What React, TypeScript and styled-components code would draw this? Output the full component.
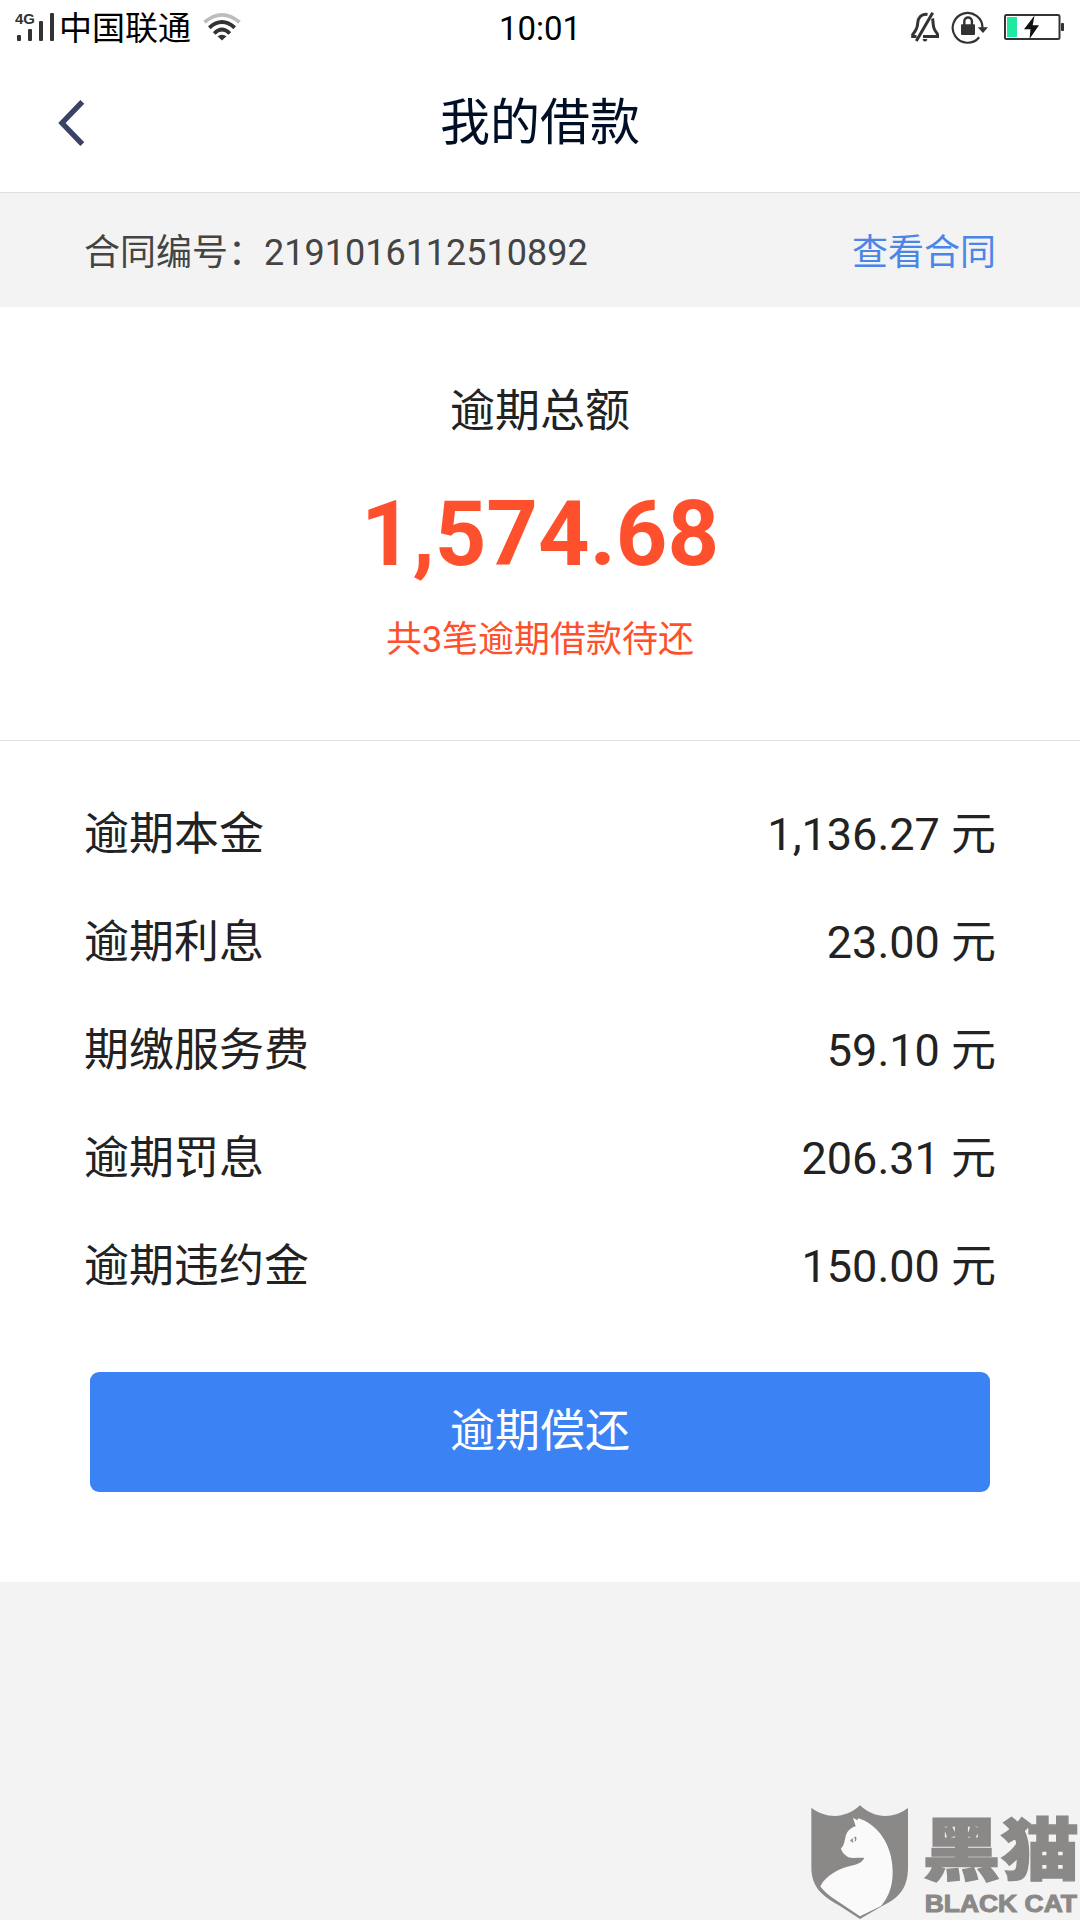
import React from "react";
import styled, { createGlobalStyle } from "styled-components";

const GlobalStyle = createGlobalStyle`
  * { box-sizing: border-box; }
  body {
    margin: 0;
    background: #f3f3f3;
    font-family: Roboto, "Noto Sans CJK SC", sans-serif;
  }
`;

const Screen = styled.div`
  position: relative;
  display: flex;
  flex-direction: column;
  width: 1080px;
  height: 1920px;
  overflow: hidden;
  background: #f3f3f3;
  color: #222;
`;

const StatusBar = styled.div`
  display: grid;
  grid-template-columns: 1fr auto 1fr;
  align-items: center;
  height: 54px;
  padding: 4px 14px 0 15px;
  background: #fff;
  color: #000;
  font-size: 33px;
  line-height: 50px;
`;

const StatusGroup = styled.div<{ $end?: boolean }>`
  display: flex;
  align-items: center;
  justify-content: ${(p) => (p.$end ? "flex-end" : "flex-start")};
  height: 50px;
`;

const Carrier = styled.span`
  margin: 0 12px 0 3px;
`;

const Clock = styled.span`
  padding-right: 1px;
`;

const Icon = styled.svg<{ $w: number; $h?: number; $ml?: number }>`
  display: block;
  flex: none;
  width: ${(p) => p.$w}px;
  height: ${(p) => p.$h ?? 50}px;
  margin-left: ${(p) => p.$ml ?? 0}px;
`;

const Header = styled.header`
  display: grid;
  grid-template-columns: 150px 1fr 150px;
  align-items: center;
  height: 139px;
  border-bottom: 1px solid #e1e1e1;
  background: #fff;
`;

const BackButton = styled.button`
  display: flex;
  align-items: center;
  height: 138px;
  padding: 0 0 0 54px;
  border: 0;
  background: none;
`;

const Title = styled.h1`
  margin: 0;
  color: #000f26;
  font-size: 50px;
  font-weight: 400;
  line-height: 138px;
  text-align: center;
`;

const ContractBar = styled.div`
  display: flex;
  justify-content: space-between;
  height: 114px;
  padding: 6px 84px 0;
  color: #444;
  font-size: 36px;
  line-height: 108px;
`;

const ContractLink = styled.a`
  color: #4a86e8;
`;

const Summary = styled.section`
  display: flex;
  flex-direction: column;
  align-items: center;
  height: 434px;
  padding-top: 75px;
  border-bottom: 1px solid #e1e1e1;
  background: #fff;
`;

const SummaryTitle = styled.div`
  font-size: 45px;
  line-height: 60px;
`;

const Amount = styled.div`
  margin: 33px 0 20px;
  color: #ff502d;
  font-size: 90px;
  font-weight: 700;
  line-height: 120px;
`;

const SummaryNote = styled.div`
  color: #ff502d;
  font-size: 36px;
  line-height: 50px;
`;

const Details = styled.section`
  height: 841px;
  padding: 40px 84px 0;
  background: #fff;
`;

const DetailRow = styled.div`
  display: flex;
  justify-content: space-between;
  font-size: 45px;
  line-height: 108px;
`;

const RepayButton = styled.button`
  display: block;
  width: 900px;
  height: 120px;
  margin: 51px auto 0;
  padding: 0;
  border: 0;
  border-radius: 9px;
  background: #3b82f4;
  color: #fff;
  font-family: inherit;
  font-size: 45px;
  line-height: 120px;
`;

const Watermark = styled.svg`
  position: absolute;
  right: 0;
  bottom: 0;
  width: 300px;
  height: 140px;
`;

const rows = [
  { label: "逾期本金", value: "1,136.27 元" },
  { label: "逾期利息", value: "23.00 元" },
  { label: "期缴服务费", value: "59.10 元" },
  { label: "逾期罚息", value: "206.31 元" },
  { label: "逾期违约金", value: "150.00 元" },
];

const SignalIcon = () => (
  <Icon $w={41} viewBox="15 4 41 50">
    <text x="15" y="24" fontFamily="Liberation Sans, sans-serif" fontWeight="700" fontSize="15" fill="#333" textLength="20" lengthAdjust="spacingAndGlyphs">4G</text>
    <g fill="#333">
      <rect x="17" y="35" width="4" height="6" rx="1" />
      <rect x="28" y="29" width="4" height="12" rx="1" />
      <rect x="39" y="21" width="4" height="20" rx="1" />
      <rect x="50" y="13" width="4" height="28" rx="1" />
    </g>
  </Icon>
);

const WifiIcon = () => (
  <Icon $w={38} viewBox="203 4 38 50">
    <g fill="none" strokeWidth="3.8">
      <path d="M204.5 22.2Q222 7.5 239.5 22.2" stroke="#bdbdbd" />
      <path d="M209.3 27.7Q222 16.5 234.7 27.7" stroke="#333" />
      <path d="M214.2 33.5Q222 25.7 229.8 33.5" stroke="#333" />
    </g>
    <path d="M217.5 36.3Q222 33 226.5 36.3L222 40.5Z" fill="#333" />
  </Icon>
);

const MutedBellIcon = () => (
  <Icon $w={30} viewBox="910 4 30 50">
    <g fill="none" stroke="#333" strokeWidth="3">
      <path d="M927.5 14.4C921 13.5 918 18 917.7 23C917.5 29 915.5 31 912.7 34.5V36.5H916.5" />
      <path d="M932.5 18.5C933.5 22 932.5 25 934.3 29C935.5 32 937.3 33 937.5 34.5V36.5H923" />
      <path d="M932.7 12.7L916.3 41" />
    </g>
    <path d="M922.8 39h4.400v1.200q-2.200 2.600-4.400 0z" fill="#333" />
  </Icon>
);

const RotationLockIcon = () => (
  <Icon $w={37} $ml={11} viewBox="951 4 37 50">
    <path d="M979.2 37.2A14.9 14.9 0 1 1 982.5 28" fill="none" stroke="#333" strokeWidth="2.2" />
    <path d="M977.7 27.3H988L983 33Z" fill="#333" />
    <rect x="961" y="24.3" width="14" height="10.7" rx="1" fill="#333" />
    <path d="M964.3 25V21.3a3.8 3.8 0 0 1 7.6 0V25" fill="none" stroke="#333" strokeWidth="2.4" />
  </Icon>
);

const BatteryIcon = () => (
  <Icon $w={62} $ml={16} viewBox="1004 4 62 50">
    <rect x="1005" y="15" width="54.5" height="24" rx="1.5" fill="none" stroke="#333" strokeWidth="2" />
    <rect x="1007" y="17" width="10" height="20" fill="#20e8a1" />
    <rect x="1061" y="23" width="3" height="8" rx="0.8" fill="#333" />
    <path d="M1034.5 15.5L1024 29.3H1030.5L1029.5 39L1039 25.3H1032.7Z" fill="#111" />
  </Icon>
);

const BlackCatLogo = () => (
  <Watermark viewBox="0 0 900 420">
    <path
      d="M94 83C137 116 196 118 240 76C284 118 341 116 384 84V262C384 336 346 359 300 382L240 417L180 378C134 352 94 327 94 262Z"
      fill="#8b8888"
    />
    <path
      d="M219 113L232 121L235 115C292 132 338 194 338 275C338 320 326 350 303 378L240 409L154 351C136 338 126 326 121 319C139 284 180 264 219 256C238 252 248 244 253 234C235 232 220 236 205 232C194 225 184 215 183 205C192 197 193 185 196 173C199 158 207 145 227 139Z"
      fill="#fafafa"
    />
    <path d="M210 184C213 177 217 175 220 175C217 179 218 184 221 187C217 188 214 187 214 183Z" fill="#8b8888" />
    <path d="M222 172C227 169 230 171 229 177C229 182 226 185 223 186C226 181 226 177 222 172Z" fill="#8b8888" />
    <g fill="#8b8888" stroke="#8b8888">
      <text x="427" y="286" fontFamily="Liberation Sans, Noto Sans CJK SC, sans-serif" fontWeight="900" fontSize="206" strokeWidth="4" textLength="471" lengthAdjust="spacingAndGlyphs">黑猫</text>
      <text x="434" y="397" fontFamily="Liberation Sans, sans-serif" fontWeight="700" fontSize="70" strokeWidth="3" textLength="457" lengthAdjust="spacingAndGlyphs">BLACK CAT</text>
    </g>
  </Watermark>
);

export default function App() {
  return (
    <Screen lang="zh-CN">
      <GlobalStyle />
      <StatusBar>
        <StatusGroup>
          <SignalIcon />
          <Carrier>中国联通</Carrier>
          <WifiIcon />
        </StatusGroup>
        <Clock>10:01</Clock>
        <StatusGroup $end>
          <MutedBellIcon />
          <RotationLockIcon />
          <BatteryIcon />
        </StatusGroup>
      </StatusBar>
      <Header>
        <BackButton aria-label="返回">
          <Icon $w={34} $h={50} viewBox="54 98 34 50">
            <path d="M82.3 101.8L62 123L82.3 144.2" fill="none" stroke="#3a4266" strokeWidth="5.4" />
          </Icon>
        </BackButton>
        <Title>我的借款</Title>
      </Header>
      <ContractBar>
        <span>合同编号：2191016112510892</span>
        <ContractLink>查看合同</ContractLink>
      </ContractBar>
      <Summary>
        <SummaryTitle>逾期总额</SummaryTitle>
        <Amount>1,574.68</Amount>
        <SummaryNote>共3笔逾期借款待还</SummaryNote>
      </Summary>
      <Details>
        {rows.map((row) => (
          <DetailRow key={row.label}>
            <span>{row.label}</span>
            <span>{row.value}</span>
          </DetailRow>
        ))}
        <RepayButton>逾期偿还</RepayButton>
      </Details>
      <BlackCatLogo />
    </Screen>
  );
}
